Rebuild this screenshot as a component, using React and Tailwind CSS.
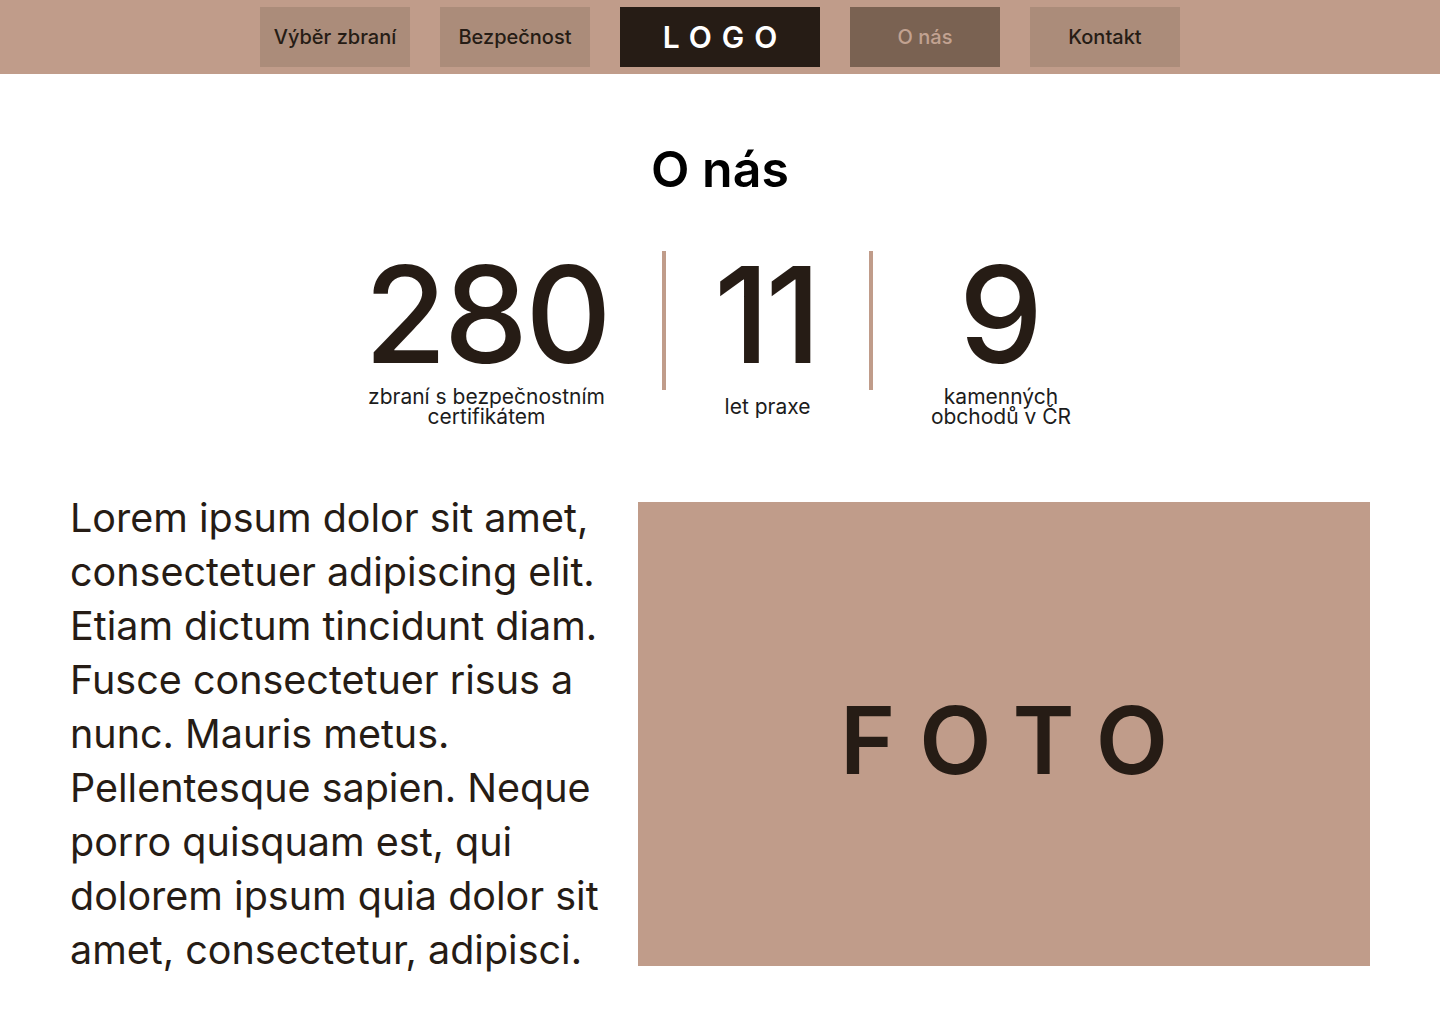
export default function App() {
  const navBtn =
    "h-[60px] w-[150px] flex items-center justify-center text-[20px] font-medium bg-[#ab8c7a] text-[#261c15]";
  return (
    <div className="min-h-screen bg-white font-['Inter',sans-serif] text-[#261c15]">
      <header className="h-[74px] bg-[#c09c8a] flex items-center justify-center gap-[30px]">
        <a className={navBtn}>Výběr zbraní</a>
        <a className={navBtn}>Bezpečnost</a>
        <a className="h-[60px] w-[200px] flex items-center justify-center bg-[#261c15] text-white text-[30px] font-semibold tracking-[10px] pl-[10px]">
          LOGO
        </a>
        <a className="h-[60px] w-[150px] flex items-center justify-center text-[20px] font-medium bg-[#7a6252] text-[#c2a291]">
          O nás
        </a>
        <a className={navBtn}>Kontakt</a>
      </header>

      <main>
        <h1 className="mt-[70px] text-center text-[50px] leading-none font-semibold text-black">
          O nás
        </h1>

        <section className="mt-[53px] flex justify-center">
          <div className="w-[351px] flex flex-col items-center">
            <div className="text-[134px] leading-none font-medium tracking-[-3px]">280</div>
            <div className="mt-[6px] h-[40px] flex items-center text-center text-[21px] leading-[20px] text-[#1c1c1c]">
              zbraní s bezpečnostním
              <br />
              certifikátem
            </div>
          </div>
          <div className="mt-[4px] w-[4px] h-[139px] bg-[#c09c8a]" />
          <div className="w-[203px] flex flex-col items-center">
            <div className="text-[134px] leading-none font-medium tracking-[-4px] pr-[4px]">11</div>
            <div className="mt-[6px] h-[40px] flex items-center text-center text-[21px] leading-[20px] text-[#1c1c1c]">
              let praxe
            </div>
          </div>
          <div className="mt-[4px] w-[4px] h-[139px] bg-[#c09c8a]" />
          <div className="w-[256px] flex flex-col items-center">
            <div className="text-[134px] leading-none font-medium">9</div>
            <div className="mt-[6px] h-[40px] flex items-center justify-center text-center text-[21px] leading-[20px] text-[#1c1c1c]">
              kamenných
              <br />
              obchodů v ČR
            </div>
          </div>
        </section>

        <section className="mt-[64px] px-[70px] flex justify-between items-start">
          <p className="text-[39.5px] leading-[54px] whitespace-nowrap text-[#261c15]">
            Lorem ipsum dolor sit amet,
            <br />
            consectetuer adipiscing elit.
            <br />
            Etiam dictum tincidunt diam.
            <br />
            Fusce consectetuer risus a
            <br />
            nunc. Mauris metus.
            <br />
            Pellentesque sapien. Neque
            <br />
            porro quisquam est, qui
            <br />
            dolorem ipsum quia dolor sit
            <br />
            amet, consectetur, adipisci.
          </p>
          <div className="mt-[11px] w-[732px] h-[464px] bg-[#c09c8a] flex items-center justify-center pt-[12px]">
            <span className="text-[94px] leading-none font-semibold tracking-[24px] pl-[24px] text-[#261c15]">
              FOTO
            </span>
          </div>
        </section>
      </main>
    </div>
  );
}
